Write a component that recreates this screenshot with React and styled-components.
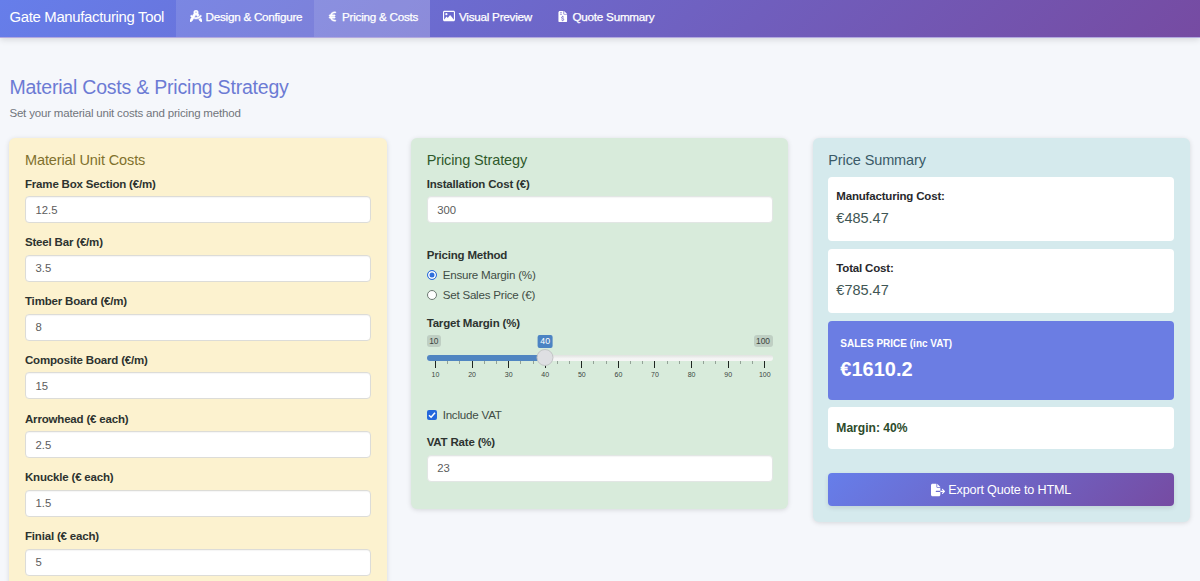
import React from "react";
import styled, { createGlobalStyle } from "styled-components";
import { FaCompassDrafting, FaEuroSign, FaRegImage, FaFileInvoiceDollar, FaFileExport } from "react-icons/fa6";

const GlobalStyle = createGlobalStyle`
  *, *::before, *::after { box-sizing: border-box; }
  body {
    margin: 0;
    background: #f5f7fb;
    color: #333;
    font-family: "Liberation Sans", Arial, sans-serif;
    font-size: 11.1px;
  }
`;

const Shell = styled.div`
  display: flex;
  flex-direction: column;
  height: 581px;
  overflow: hidden;
`;

const Navbar = styled.nav`
  display: flex;
  flex: none;
  height: 38px;
  padding-left: 9.5px;
  background: linear-gradient(135deg, #667eea 0%, #764ba2 100%);
  border-bottom: 1px solid #b3a9df;
  box-shadow: 0 2px 6px rgba(0, 0, 0, 0.12);
`;

const Brand = styled.span`
  width: 166.5px;
  line-height: 34px;
  font-size: 14.9px;
  letter-spacing: -0.32px;
  color: #fff;
  white-space: nowrap;
`;

const NavTab = styled.a`
  display: flex;
  align-items: center;
  gap: ${(p) => p.$gap || 3}px;
  width: ${(p) => p.$width}px;
  height: 37px;
  padding: 0 0 4.5px ${(p) => p.$inset || 13}px;
  font-size: 11.7px;
  letter-spacing: -0.25px;
  color: #fff;
  -webkit-text-stroke: 0.25px #fff;
  white-space: nowrap;
  background: rgba(255, 255, 255, ${(p) => p.$tint || 0});
  svg { flex: none; }
`;

const Page = styled.main`
  flex: 1;
  min-height: 0;
  overflow: hidden;
  padding: 37.5px 10px 0 9.4px;
`;

const Title = styled.h2`
  margin: 0;
  font-size: 19.5px;
  line-height: 23px;
  letter-spacing: -0.21px;
  font-weight: 400;
  color: #6c7bd4;
`;

const Subtitle = styled.p`
  margin: 7.5px 0 16.5px;
  font-size: 11.5px;
  line-height: 15px;
  letter-spacing: -0.18px;
  color: #71757b;
`;

const Columns = styled.div`
  display: grid;
  grid-template-columns: repeat(3, 1fr);
  column-gap: 24.4px;
  align-items: start;
`;

const tones = {
  yellow: { bg: "#fcf2cf", title: "#80702c" },
  green: { bg: "#d8ebdb", title: "#2f5a2b" },
  blue: { bg: "#d5eaed", title: "#3a5a68" },
};

const Card = styled.section`
  height: ${(p) => p.$height}px;
  padding: 14px 15.8px 0 15.6px;
  border-radius: 6px;
  background: ${(p) => tones[p.$tone].bg};
  box-shadow: 0 1px 5px rgba(0, 0, 0, 0.13);
`;

const CardTitle = styled.h4`
  margin: 0 0 ${(p) => p.$after ?? 7}px;
  font-size: 14.5px;
  line-height: 17px;
  letter-spacing: -0.12px;
  font-weight: 400;
  color: ${(p) => tones[p.$tone].title};
`;

const Field = styled.div`
  margin-top: ${(p) => p.$before ?? 0}px;
  margin-bottom: ${(p) => p.$after ?? 11.25}px;
`;

const Label = styled.label`
  display: block;
  margin-bottom: ${(p) => p.$after ?? 4.5}px;
  font-size: 11.5px;
  line-height: 16px;
  letter-spacing: -0.18px;
  font-weight: 700;
  color: #2d3330;
`;

const Input = styled.input`
  display: block;
  width: 100%;
  height: 27px;
  padding: 0 9.5px;
  border: 1px solid ${(p) => (p.$soft ? "#e2e6e4" : "#dcdcd8")};
  border-radius: 4px;
  outline: none;
  background: #fff;
  box-shadow: inset 0 1px 1px rgba(0, 0, 0, 0.04);
  font: 11.3px "Liberation Sans", Arial, sans-serif;
  color: #5c5c5c;
`;

const Choice = styled.label`
  display: flex;
  align-items: center;
  gap: 6px;
  height: 20px;
  font-size: 11.6px;
  line-height: 20px;
  letter-spacing: -0.22px;
  color: #3f4d45;
`;

const Radio = styled.span`
  width: 10px;
  height: 10px;
  border-radius: 50%;
  border: 1px solid ${(p) => (p.$on ? "#2f6fdc" : "#6d7a72")};
  background: ${(p) => (p.$on ? "#2f6fdc" : "#fff")};
  box-shadow: ${(p) => (p.$on ? "inset 0 0 0 1.5px #fff" : "none")};
`;

const Check = styled.span`
  display: grid;
  place-items: center;
  width: 10px;
  height: 10px;
  border-radius: 2px;
  background: #2468dc;
`;

const MarginField = styled.div`
  height: 99.5px;
  padding-top: 9.5px;
`;

const SliderLabels = styled.div`
  position: relative;
  display: flex;
  justify-content: space-between;
  height: 20px;
`;

const Bound = styled.span`
  height: 12px;
  padding: 0 2.5px;
  border-radius: 3px;
  background: #bfcfc3;
  font-size: 8.4px;
  line-height: 12px;
  color: #3c4540;
`;

const Value = styled.span`
  position: absolute;
  left: 34.3%;
  transform: translateX(-50%);
  height: 13px;
  padding: 0 2.5px;
  border-radius: 2px;
  background: #4c83c3;
  font-size: 8.8px;
  line-height: 13px;
  color: #fff;
`;

const Track = styled.div`
  position: relative;
  height: 6px;
  border-radius: 4px;
  background: linear-gradient(#e0e2e0, #f5f5f5 60%);
`;

const Filled = styled.div`
  width: 34.3%;
  height: 6px;
  border-radius: 4px 0 0 4px;
  background: #5085c1;
`;

const Handle = styled.span`
  position: absolute;
  left: 34.3%;
  top: -6px;
  width: 17px;
  height: 17px;
  transform: translateX(-50%);
  border: 1px solid #c2c4c5;
  border-radius: 50%;
  background: #dedfe2;
`;

const Ticks = styled.div`
  display: flex;
  justify-content: space-between;
  padding: 0 7.2px 0 8.4px;
  height: 8px;
`;

const Tick = styled.i`
  width: 1px;
  height: ${(p) => (p.$major ? 7 : 3)}px;
  background: ${(p) => (p.$major ? "#1f2622" : "#93a297")};
`;

const Scale = styled.div`
  display: flex;
  justify-content: space-between;
  margin: 1.5px -2.3px 0 -1.2px;
  span {
    width: 20px;
    text-align: center;
    font-size: 7px;
    line-height: 9px;
    color: #3a453e;
  }
`;

const CostBox = styled.div`
  height: 64px;
  margin-bottom: 8px;
  padding: 11px 8px 0;
  border-radius: 4px;
  background: #fff;
  strong {
    display: block;
    font-size: 11.5px;
    line-height: 16px;
    letter-spacing: -0.18px;
    color: #28282c;
  }
  p {
    margin: 5px 0 0;
    font-size: 14.5px;
    line-height: 19px;
    color: #3f5654;
  }
`;

const SalesBox = styled.div`
  height: 78.5px;
  margin-bottom: 7.5px;
  padding: 15px 12px 0;
  border-radius: 4px;
  background: #6b7de3;
  color: #fff;
  font-weight: 700;
  small {
    display: block;
    font-size: 10px;
    line-height: 15px;
  }
  p {
    margin: 6px 0 0;
    font-size: 20px;
    line-height: 24px;
  }
`;

const MarginBox = styled.div`
  height: 41.5px;
  padding-left: 8px;
  border-radius: 4px;
  background: #fff;
  font-size: 12.1px;
  line-height: 42px;
  font-weight: 700;
  color: #2d4b2a;
`;

const ExportButton = styled.button`
  display: flex;
  align-items: center;
  justify-content: center;
  gap: 3px;
  width: 100%;
  height: 33px;
  margin-top: 24.5px;
  padding: 0;
  border: 0;
  border-radius: 4px;
  background: linear-gradient(135deg, #667eea 0%, #764ba2 100%);
  box-shadow: 0 2px 5px rgba(0, 0, 0, 0.1);
  font: 12.6px "Liberation Sans", Arial, sans-serif;
  letter-spacing: -0.16px;
  color: #fff;
`;

const materials = [
  ["Frame Box Section (€/m)", "12.5"],
  ["Steel Bar (€/m)", "3.5"],
  ["Timber Board (€/m)", "8"],
  ["Composite Board (€/m)", "15"],
  ["Arrowhead (€ each)", "2.5"],
  ["Knuckle (€ each)", "1.5"],
  ["Finial (€ each)", "5"],
];

const scale = [10, 20, 30, 40, 50, 60, 70, 80, 90, 100];

function MarginSlider() {
  return (
    <MarginField>
      <Label $after={4}>Target Margin (%)</Label>
      <SliderLabels>
        <Bound>10</Bound>
        <Value>40</Value>
        <Bound>100</Bound>
      </SliderLabels>
      <Track><Filled /><Handle /></Track>
      <Ticks>
        {Array.from({ length: 28 }, (_, i) => <Tick key={i} $major={i % 3 === 0} />)}
      </Ticks>
      <Scale>{scale.map((n) => <span key={n}>{n}</span>)}</Scale>
    </MarginField>
  );
}

export default function App() {
  return (
    <Shell>
      <GlobalStyle />
      <Navbar>
        <Brand>Gate Manufacturing Tool</Brand>
        <NavTab $width={138} $tint={0.12} $gap={4} $inset={13.5}><FaCompassDrafting size={12} stroke="#fff" strokeWidth={20} />Design &amp; Configure</NavTab>
        <NavTab $width={116} $tint={0.22} $gap={4}><FaEuroSign size={11} stroke="#fff" strokeWidth={20} />Pricing &amp; Costs</NavTab>
        <NavTab $width={114} $gap={4}><FaRegImage size={12} />Visual Preview</NavTab>
        <NavTab $width={120} $gap={4}><FaFileInvoiceDollar size={11.5} />Quote Summary</NavTab>
      </Navbar>
      <Page>
        <Title>Material Costs &amp; Pricing Strategy</Title>
        <Subtitle>Set your material unit costs and pricing method</Subtitle>
        <Columns>
          <Card $tone="yellow" $height={520}>
            <CardTitle $tone="yellow">Material Unit Costs</CardTitle>
            {materials.map(([name, value]) => (
              <Field key={name}>
                <Label>{name}</Label>
                <Input defaultValue={value} />
              </Field>
            ))}
          </Card>
          <Card $tone="green" $height={371.5}>
            <CardTitle $tone="green">Pricing Strategy</CardTitle>
            <Field $after={24}>
              <Label>Installation Cost (€)</Label>
              <Input $soft defaultValue="300" />
            </Field>
            <Label $after={2}>Pricing Method</Label>
            <Choice><Radio $on />Ensure Margin (%)</Choice>
            <Choice><Radio />Set Sales Price (€)</Choice>
            <MarginSlider />
            <Choice>
              <Check>
                <svg width="8" height="8" viewBox="0 0 8 8" fill="none" stroke="#fff" strokeWidth="1.5">
                  <path d="M1 4.2 3.1 6.2 7 1.7" />
                </svg>
              </Check>
              Include VAT
            </Choice>
            <Field $before={9.5} $after={0}>
              <Label>VAT Rate (%)</Label>
              <Input $soft defaultValue="23" />
            </Field>
          </Card>
          <Card $tone="blue" $height={384}>
            <CardTitle $tone="blue" $after={8.5}>Price Summary</CardTitle>
            <CostBox><strong>Manufacturing Cost:</strong><p>€485.47</p></CostBox>
            <CostBox><strong>Total Cost:</strong><p>€785.47</p></CostBox>
            <SalesBox><small>SALES PRICE (inc VAT)</small><p>€1610.2</p></SalesBox>
            <MarginBox>Margin: 40%</MarginBox>
            <ExportButton><FaFileExport size={14} />Export Quote to HTML</ExportButton>
          </Card>
        </Columns>
      </Page>
    </Shell>
  );
}
